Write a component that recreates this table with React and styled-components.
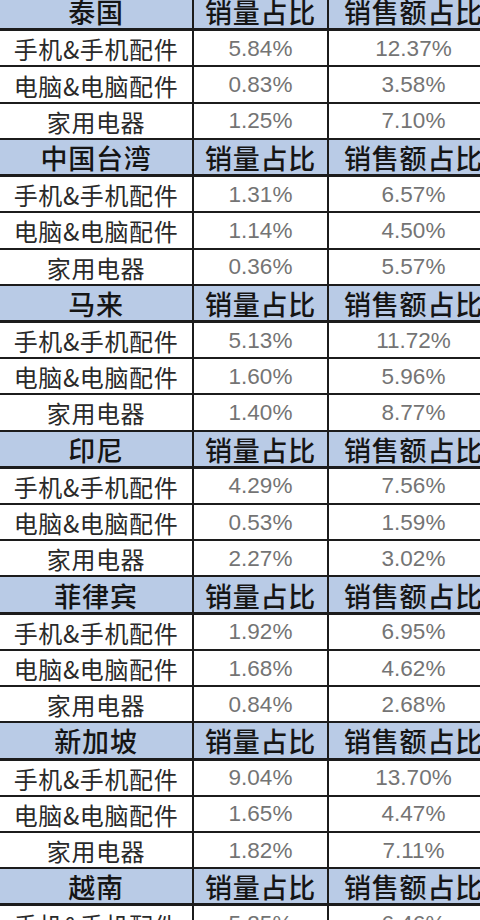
import React from "react";
import styled, { createGlobalStyle } from "styled-components";

const GlobalStyle = createGlobalStyle`
  html, body {
    margin: 0;
    padding: 0;
    background: #ffffff;
    overflow: hidden;
  }
`;

const Page = styled.div`
  width: 480px;
  height: 920px;
  overflow: hidden;
  background: #ffffff;
`;

const Sheet = styled.div`
  width: 500px;
  margin-top: -6px;
  display: flex;
  flex-direction: column;
`;

const Row = styled.div`
  display: grid;
  grid-template-columns: 194px 135px 1fr;
  height: ${(p) => (p.$head ? "37.3px" : "36.2px")};
  box-sizing: border-box;
  border-bottom: ${(p) => (p.$head ? "3px" : "2px")} solid #1c1c1c;
  background: ${(p) => (p.$head ? "#b9cbe6" : "#ffffff")};
`;

const Cell = styled.div`
  display: flex;
  align-items: center;
  justify-content: center;
  box-sizing: border-box;
  border-right: 2px solid #1c1c1c;
  white-space: nowrap;
  overflow: hidden;
  font-family: ${(p) =>
    p.$num
      ? '"Liberation Sans", Arial, sans-serif'
      : '"Noto Sans CJK SC", "Noto Sans", sans-serif'};
  font-size: ${(p) => (p.$head ? "27px" : p.$num ? "22.5px" : "24px")};
  font-weight: ${(p) => (p.$head ? 500 : 400)};
  color: ${(p) => (p.$head ? "#151515" : p.$num ? "#747474" : "#2a2a2a")};
  letter-spacing: ${(p) => (p.$head ? "0.8px" : p.$num ? "0" : "0.6px")};
  padding-top: 1px;
`;

const groups = [
  { name: "泰国", rows: [["5.84%", "12.37%"], ["0.83%", "3.58%"], ["1.25%", "7.10%"]] },
  { name: "中国台湾", rows: [["1.31%", "6.57%"], ["1.14%", "4.50%"], ["0.36%", "5.57%"]] },
  { name: "马来", rows: [["5.13%", "11.72%"], ["1.60%", "5.96%"], ["1.40%", "8.77%"]] },
  { name: "印尼", rows: [["4.29%", "7.56%"], ["0.53%", "1.59%"], ["2.27%", "3.02%"]] },
  { name: "菲律宾", rows: [["1.92%", "6.95%"], ["1.68%", "4.62%"], ["0.84%", "2.68%"]] },
  { name: "新加坡", rows: [["9.04%", "13.70%"], ["1.65%", "4.47%"], ["1.82%", "7.11%"]] },
  { name: "越南", rows: [["5.25%", "6.46%"], ["", ""], ["", ""]] },
];

const categories = ["手机&手机配件", "电脑&电脑配件", "家用电器"];

export default function App() {
  return (
    <Page>
      <GlobalStyle />
      <Sheet>
        {groups.map((g) => (
          <React.Fragment key={g.name}>
            <Row $head>
              <Cell $head>{g.name}</Cell>
              <Cell $head>销量占比</Cell>
              <Cell $head>销售额占比</Cell>
            </Row>
            {g.rows.map((r, i) => (
              <Row key={i}>
                <Cell>{categories[i]}</Cell>
                <Cell $num>{r[0]}</Cell>
                <Cell $num>{r[1]}</Cell>
              </Row>
            ))}
          </React.Fragment>
        ))}
      </Sheet>
    </Page>
  );
}
